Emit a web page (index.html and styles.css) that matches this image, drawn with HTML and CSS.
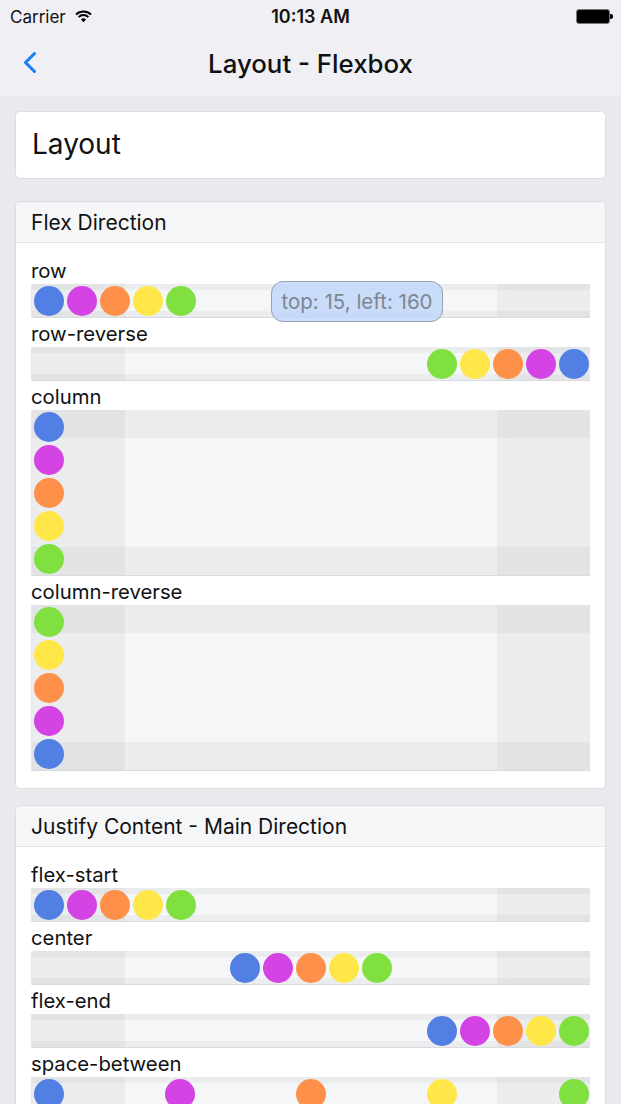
FILE: index.html
```html
<!DOCTYPE html>
<html lang="en">
<head>
  <meta charset="UTF-8">
  <meta name="viewport" content="width=device-width, initial-scale=1.0">
  <title>Layout - Flexbox</title>
  <link rel="stylesheet" href="styles.css">
</head>
<body>
  <header class="top">
    <div class="status">
      <div class="carrier">
        Carrier
        <svg class="wifi" width="17" height="13" viewBox="0 0 16 12">
          <path d="M8 11.5 L5.6 8.8 A3.4 3.4 0 0 1 10.4 8.8 Z" fill="#000"/>
          <path d="M3.4 6.6 A6.5 6.5 0 0 1 12.6 6.6" fill="none" stroke="#000" stroke-width="1.9"/>
          <path d="M1 4.1 A10 10 0 0 1 15 4.1" fill="none" stroke="#000" stroke-width="1.9"/>
        </svg>
      </div>
      <div class="time">10:13 AM</div>
      <div class="battery">
        <div class="battery-body"></div>
        <div class="battery-tip"></div>
      </div>
    </div>
    <div class="navbar">
      <svg class="back" width="14" height="21" viewBox="0 0 14 21">
        <path d="M11.5 1.5 L2.5 10.5 L11.5 19.5" fill="none" stroke="#157efb" stroke-width="3" stroke-linecap="round" stroke-linejoin="round"/>
      </svg>
      <div class="nav-title">Layout - Flexbox</div>
    </div>
  </header>

  <main class="content">
    <div class="card title-card">
      <h1>Layout</h1>
    </div>

    <section class="card">
      <div class="card-head">Flex Direction</div>
      <div class="card-body">
        <div class="label">row</div>
        <div class="demo">
          <span class="dot blue"></span><span class="dot pink"></span><span class="dot orange"></span><span class="dot yellow"></span><span class="dot green"></span>
        </div>
        <div class="label">row-reverse</div>
        <div class="demo reverse">
          <span class="dot blue"></span><span class="dot pink"></span><span class="dot orange"></span><span class="dot yellow"></span><span class="dot green"></span>
        </div>
        <div class="label">column</div>
        <div class="demo column">
          <span class="dot blue"></span><span class="dot pink"></span><span class="dot orange"></span><span class="dot yellow"></span><span class="dot green"></span>
        </div>
        <div class="label">column-reverse</div>
        <div class="demo column-reverse">
          <span class="dot blue"></span><span class="dot pink"></span><span class="dot orange"></span><span class="dot yellow"></span><span class="dot green"></span>
        </div>

        <div class="tip">top: 15, left: 160</div>
      </div>
    </section>

    <section class="card">
      <div class="card-head">Justify Content - Main Direction</div>
      <div class="card-body">
        <div class="label">flex-start</div>
        <div class="demo">
          <span class="dot blue"></span><span class="dot pink"></span><span class="dot orange"></span><span class="dot yellow"></span><span class="dot green"></span>
        </div>
        <div class="label">center</div>
        <div class="demo center">
          <span class="dot blue"></span><span class="dot pink"></span><span class="dot orange"></span><span class="dot yellow"></span><span class="dot green"></span>
        </div>
        <div class="label">flex-end</div>
        <div class="demo end">
          <span class="dot blue"></span><span class="dot pink"></span><span class="dot orange"></span><span class="dot yellow"></span><span class="dot green"></span>
        </div>
        <div class="label">space-between</div>
        <div class="demo between">
          <span class="dot blue"></span><span class="dot pink"></span><span class="dot orange"></span><span class="dot yellow"></span><span class="dot green"></span>
        </div>
      </div>
    </section>
  </main>
</body>
</html>
```

FILE: styles.css
```css
* {
  box-sizing: border-box;
  margin: 0;
  padding: 0;
}

html, body {
  height: 1104px;
  overflow: hidden;
}

body {
  font-family: 'Inter', 'Roboto', sans-serif;
  background: #e9eaed;
  color: #111;
}

/* status bar + nav */

.top {
  background: #efeff4;
  height: 96px;
}

.status {
  height: 33px;
  display: flex;
  align-items: center;
  justify-content: space-between;
  padding: 0 8px 0 10px;
  position: relative;
}

.carrier {
  font-size: 17px;
  display: flex;
  align-items: center;
  gap: 9px;
}

.wifi {
  margin-top: -1px;
}

.time {
  position: absolute;
  left: 0;
  right: 0;
  text-align: center;
  font-size: 18px;
  font-weight: 600;
}

.battery {
  display: flex;
  align-items: center;
}

.battery-body {
  width: 34px;
  height: 15px;
  background: #000;
  border: 1px solid #777;
  border-radius: 3px;
}

.battery-tip {
  width: 3px;
  height: 5px;
  background: #000;
  border-radius: 0 2px 2px 0;
}

.navbar {
  height: 63px;
  display: flex;
  align-items: center;
  justify-content: center;
  position: relative;
}

.back {
  position: absolute;
  left: 23px;
  top: 19px;
}

.nav-title {
  font-size: 25.8px;
  font-weight: 500;
  margin-top: -3px;
}

/* content */

.content {
  padding: 15px 15px 0;
}

.card {
  background: #fff;
  border: 1px solid #dcdde0;
  border-radius: 5px;
  margin-bottom: 16px;
}

.title-card {
  height: 68px;
  display: flex;
  align-items: center;
  padding-left: 16px;
  margin-bottom: 22px;
}

.title-card h1 {
  font-size: 28px;
  font-weight: 400;
  margin-top: -2px;
}

.card-head {
  background: #f5f6f8;
  height: 41px;
  border-bottom: 1px solid #e4e5e8;
  border-radius: 5px 5px 0 0;
  display: flex;
  align-items: center;
  padding-left: 15px;
  font-size: 21px;
}

.card-body {
  padding: 12px 15px 17px;
  position: relative;
}

.label {
  font-size: 20.3px;
  line-height: 29px;
  padding-top: 1px;
}

.demo {
  display: flex;
  margin-top: -1px;
  border-bottom: 1px solid #dadbde;
  border-left: 1px solid #e8e9eb;
  background:
    linear-gradient(to right, rgba(0,0,0,0.04) 16.7%, transparent 16.7%, transparent 83.3%, rgba(0,0,0,0.04) 83.3%),
    linear-gradient(to bottom, rgba(0,0,0,0.04) 17%, transparent 17%, transparent 83%, rgba(0,0,0,0.04) 83%),
    #f5f6f8;
}

.reverse { flex-direction: row-reverse; }
.column { flex-direction: column; }
.column-reverse { flex-direction: column-reverse; }
.center { justify-content: center; }
.end { justify-content: flex-end; }
.between { justify-content: space-between; }

.dot {
  width: 30px;
  height: 30px;
  border-radius: 50%;
  margin: 1.5px;
  flex-shrink: 0;
}

.blue { background: #527fe4; }
.pink { background: #d443e3; }
.orange { background: #ff9049; }
.yellow { background: #ffe649; }
.green { background: #7fe040; }

.tip {
  position: absolute;
  top: 38px;
  left: 255px;
  width: 172px;
  height: 41px;
  background: rgba(190, 214, 250, 0.8);
  border: 1px solid #98a1b1;
  border-radius: 12px;
  color: #80868f;
  font-size: 20.5px;
  display: flex;
  align-items: center;
  justify-content: center;
}
```
